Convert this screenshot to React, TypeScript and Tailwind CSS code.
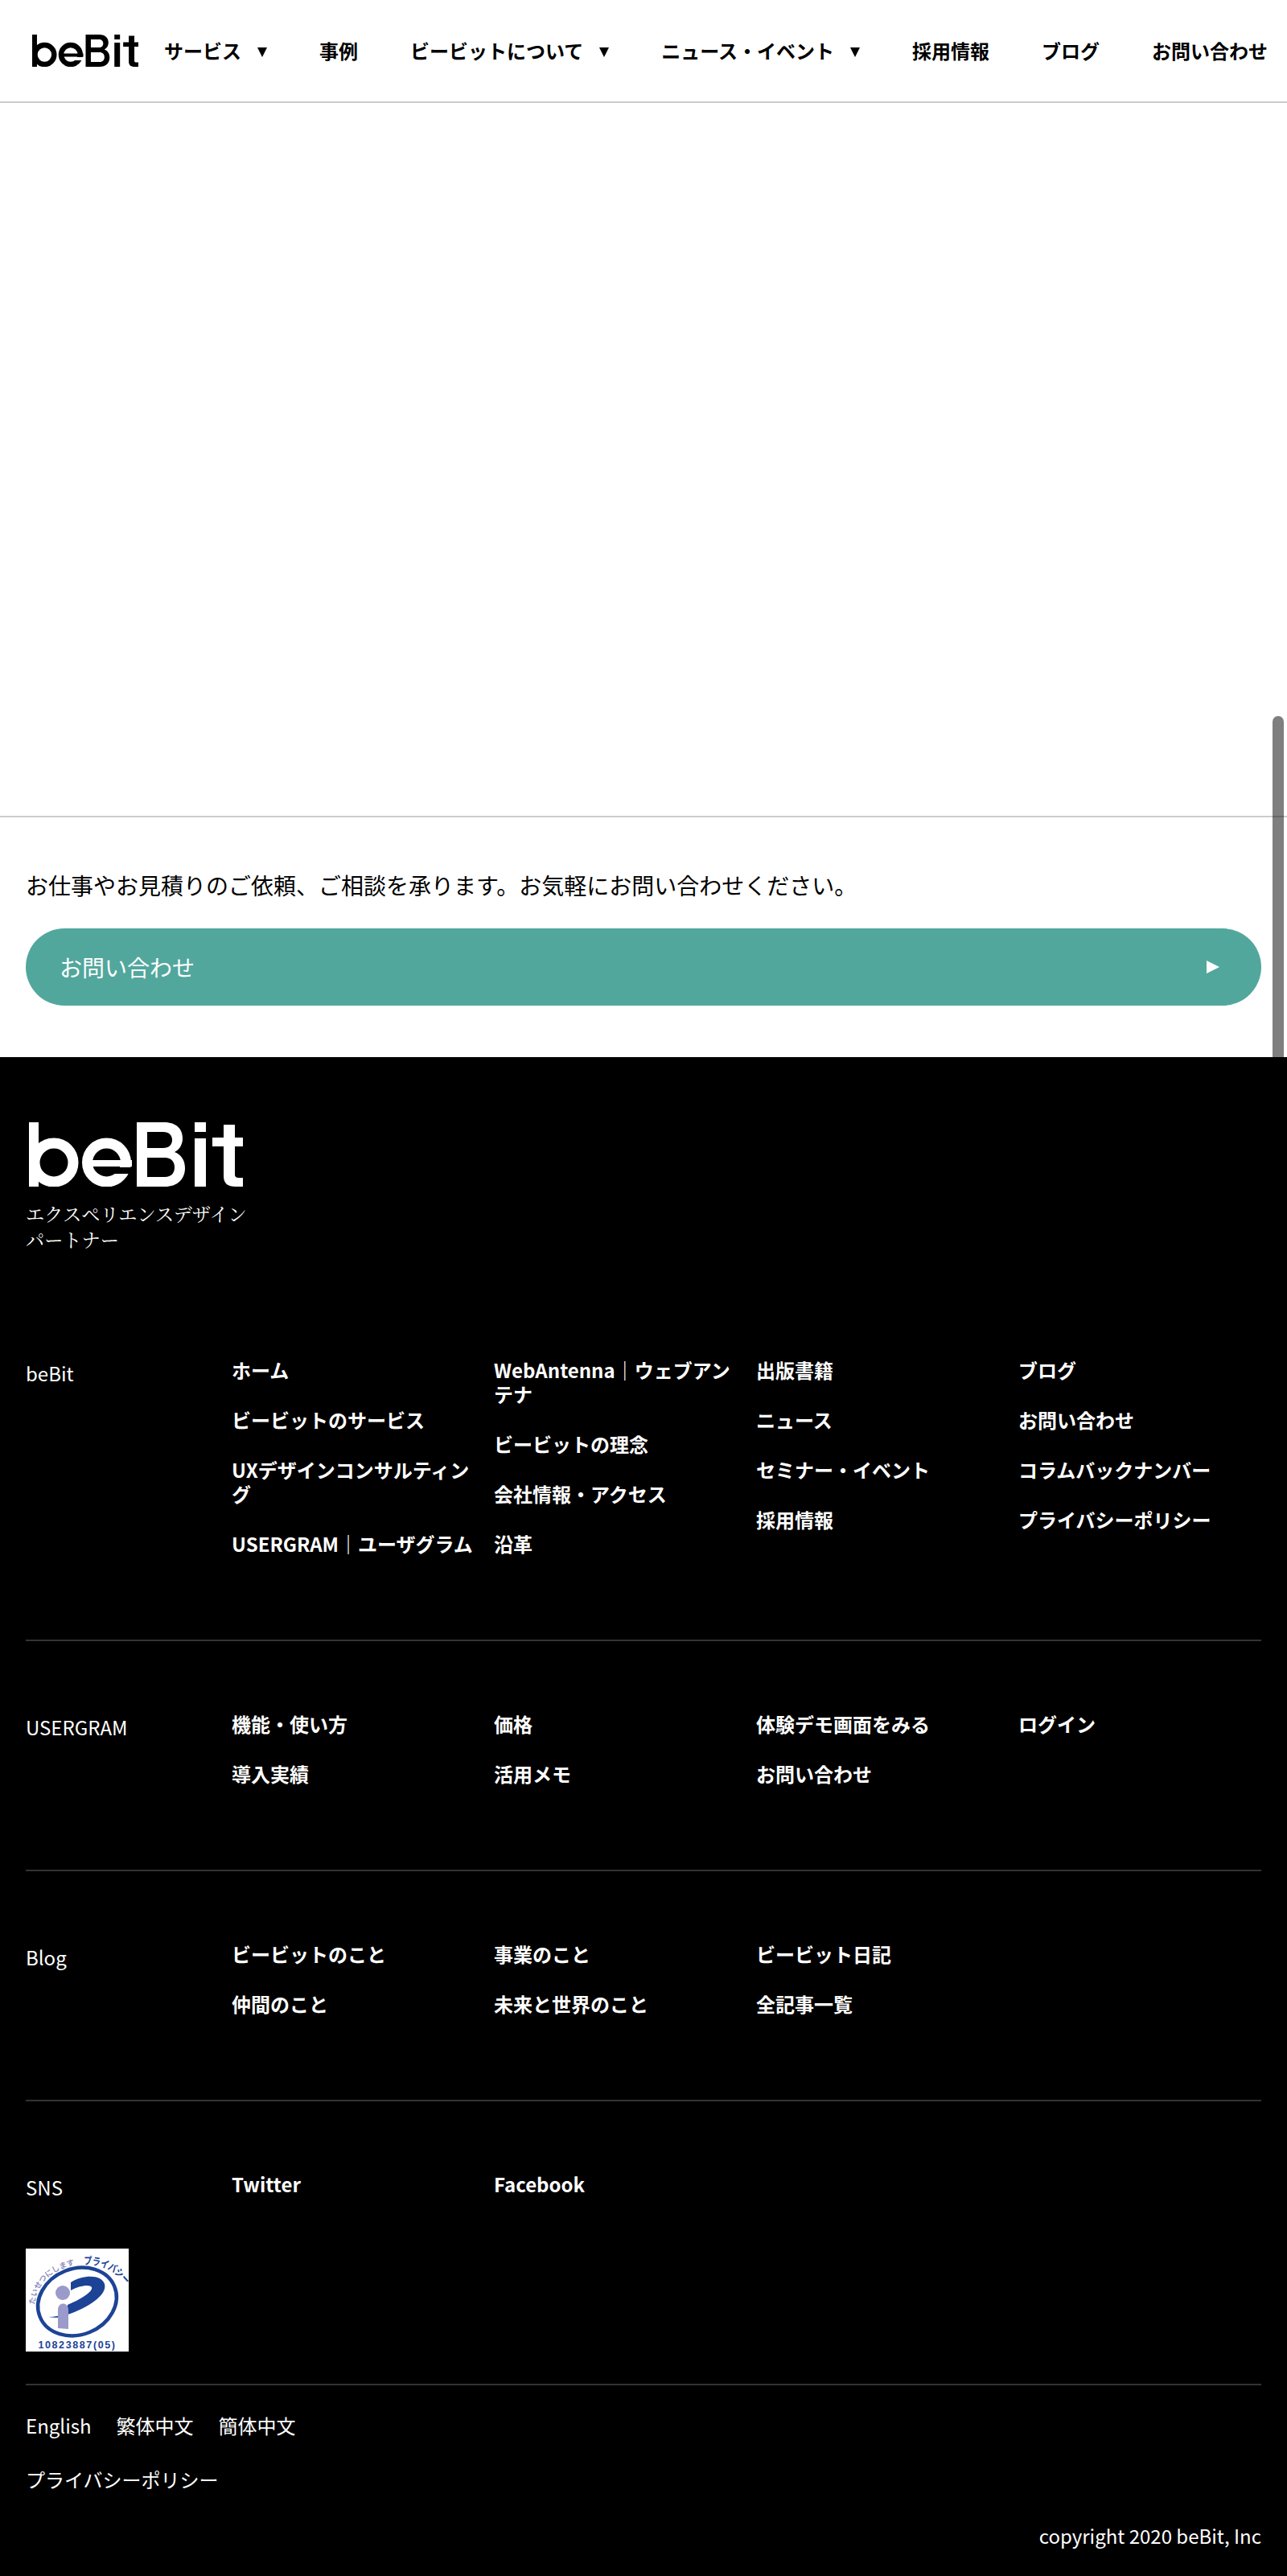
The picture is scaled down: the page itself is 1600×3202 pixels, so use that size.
const jp = "font-['Noto_Sans_CJK_JP',sans-serif]";

function Logo({ fg, bg, className }: { fg: string; bg: string; className: string }) {
  return (
    <svg viewBox="0 0 266 80" className={className} preserveAspectRatio="none">
      {/* b */}
      <rect x="0" y="0" width="12" height="80" fill={fg} />
      <circle cx="31" cy="50" r="24" fill="none" stroke={fg} strokeWidth="13" />
      {/* e */}
      <circle cx="96.5" cy="50" r="24" fill="none" stroke={fg} strokeWidth="13" />
      <rect x="70" y="47" width="58" height="8" fill={fg} />
      <rect x="100" y="56" width="28" height="8" fill={bg} />
      {/* B */}
      <path
        d="M134 0h34c16 0 23 9 23 20 0 8-4 14-10 17 8 3 13 10 13 20 0 14-10 23-25 23h-35zM147 12v20h20c7 0 11-4 11-10s-4-10-11-10zM147 44v24h22c8 0 12-5 12-12s-4-12-12-12z"
        fill={fg}
        fillRule="evenodd"
      />
      {/* i */}
      <rect x="206" y="0" width="14" height="12" fill={fg} />
      <rect x="206" y="20" width="14" height="60" fill={fg} />
      {/* t */}
      <rect x="228" y="19" width="38" height="11" fill={fg} />
      <path d="M242 3h14v62c0 3 2 4 5 4h5v11h-9c-10 0-15-4-15-13z" fill={fg} />
    </svg>
  );
}

function NavItem({ label, caret }: { label: string; caret?: boolean }) {
  return (
    <div className="flex items-center">
      <span className="text-2xl leading-none font-bold whitespace-nowrap text-black">{label}</span>
      {caret && (
        <svg viewBox="0 0 12 12" className="mt-1 ml-5 h-3 w-3">
          <polygon points="0,0 12,0 6,12" fill="#000" />
        </svg>
      )}
    </div>
  );
}

function PrivacyMark() {
  return (
    <div className="h-32 w-32 bg-white">
      <svg viewBox="0 0 128 128" className="h-32 w-32">
        <defs>
          <path id="markArc" d="M11 70Q16 26 72 18" />
          <path id="markArc2" d="M72 20Q105 18 126 48" />
        </defs>
        <text fontSize="9.5" fill="#8f8fc4" fontFamily="Noto Sans CJK JP" fontWeight="700">
          <textPath href="#markArc">たいせつにします</textPath>
        </text>
        <text fontSize="13" fill="#1c4396" fontFamily="Noto Sans CJK JP" fontWeight="700">
          <textPath href="#markArc2" textLength="60" lengthAdjust="spacingAndGlyphs">
            プライバシー
          </textPath>
        </text>
        <ellipse cx="64" cy="66" rx="50" ry="41" transform="rotate(-22 64 66)" fill="none" stroke="#1c4396" strokeWidth="4.5" />
        <path d="M56 42C72 32 94 32 98 44 102 58 76 74 52 82L52 70C66 64 84 54 82 48 80 44 66 46 56 52z" fill="#1c4396" />
        <path d="M28 85C36 85 44 83 50 81L50 85C42 86 34 86 28 85z" fill="#1c4396" />
        <circle cx="46" cy="55" r="9" fill="#9a9acb" />
        <path d="M40 76C40 66 53 66 53 76V100L40 99z" fill="#9a9acb" />
        <text x="64" y="124" textAnchor="middle" fontSize="12.5" fill="#1c4396" letterSpacing="1.6" fontFamily="Liberation Sans" fontWeight="700">
          10823887(05)
        </text>
      </svg>
    </div>
  );
}

const sections: { title: string; columns: string[][] }[] = [
  {
    title: "beBit",
    columns: [
      ["ホーム", "ビービットのサービス", "UXデザインコンサルティング", "USERGRAM｜ユーザグラム"],
      ["WebAntenna｜ウェブアンテナ", "ビービットの理念", "会社情報・アクセス", "沿革"],
      ["出版書籍", "ニュース", "セミナー・イベント", "採用情報"],
      ["ブログ", "お問い合わせ", "コラムバックナンバー", "プライバシーポリシー"],
    ],
  },
  {
    title: "USERGRAM",
    columns: [["機能・使い方", "導入実績"], ["価格", "活用メモ"], ["体験デモ画面をみる", "お問い合わせ"], ["ログイン"]],
  },
  {
    title: "Blog",
    columns: [["ビービットのこと", "仲間のこと"], ["事業のこと", "未来と世界のこと"], ["ビービット日記", "全記事一覧"], []],
  },
];

function FooterSection({ title, columns, last }: { title: string; columns: string[][]; last?: boolean }) {
  return (
    <div className={last ? "flex pt-[88px]" : "flex border-b-2 border-[#333] pt-[88px] pb-[72px]"}>
      <div className="w-[256px] pt-1 text-2xl leading-[30px] font-normal">{title}</div>
      <div className="grid flex-1 grid-cols-4 gap-x-6">
        {columns.map((links, i) => (
          <ul key={i} className="flex flex-col">
            {links.map((link) => (
              <li key={link} className="mb-8 text-2xl leading-[30px] font-bold">
                {link}
              </li>
            ))}
          </ul>
        ))}
      </div>
    </div>
  );
}

export default function App() {
  return (
    <div className={`relative w-[1600px] bg-white ${jp}`}>
      <header className="flex h-[128px] items-center border-b-2 border-[#ccc] pl-10">
        <Logo fg="#000" bg="#fff" className="mr-8 h-10 w-[132px]" />
        <nav className="flex items-center gap-[65px]">
          <NavItem label="サービス" caret />
          <NavItem label="事例" />
          <NavItem label="ビービットについて" caret />
          <NavItem label="ニュース・イベント" caret />
          <NavItem label="採用情報" />
          <NavItem label="ブログ" />
          <NavItem label="お問い合わせ" />
        </nav>
      </header>

      <main className="h-[886px]" />

      <section className="border-t-2 border-[#ccc] px-8 pt-16 pb-16">
        <p className="text-[28px] leading-10 text-black">お仕事やお見積りのご依頼、ご相談を承ります。お気軽にお問い合わせください。</p>
        <div className="mt-[34px] flex h-24 items-center justify-between rounded-full bg-[#52a79d] pr-[52px] pl-[42px] text-white">
          <span className="text-[28px]">お問い合わせ</span>
          <svg viewBox="0 0 16 16" className="h-4 w-4">
            <polygon points="0,0 16,8 0,16" fill="#fff" />
          </svg>
        </div>
      </section>

      <footer className="bg-black px-8 pb-[36px] text-white">
        <div className="pt-[81px] pb-[44px]">
          <Logo fg="#fff" bg="#000" className="ml-1 h-20 w-[266px]" />
          <p className="mt-[17px] w-[280px] font-['Noto_Serif_CJK_JP','Noto_Serif_JP',serif] text-[23.2px] leading-8 text-white">
            エクスペリエンスデザイン
            <br />
            パートナー
          </p>
        </div>

        {sections.map((section) => (
          <FooterSection key={section.title} title={section.title} columns={section.columns} />
        ))}
        <FooterSection title="SNS" columns={[["Twitter"], ["Facebook"], [], []]} last />

        <div className="mt-[33px] border-b-2 border-[#333] pb-[40px]">
          <PrivacyMark />
        </div>

        <div className="mt-8 flex gap-[31px] text-2xl leading-9">
          <span>English</span>
          <span>繁体中文</span>
          <span>簡体中文</span>
        </div>
        <div className="mt-[31px] text-2xl leading-9">プライバシーポリシー</div>
        <div className="mt-[34px] text-right text-2xl leading-9">copyright 2020 beBit, Inc</div>
      </footer>

      {/* overlay scrollbar */}
      <div className="absolute top-[890px] left-[1582px] h-[424px] w-[14px] rounded-t-full bg-black/50" />
    </div>
  );
}
